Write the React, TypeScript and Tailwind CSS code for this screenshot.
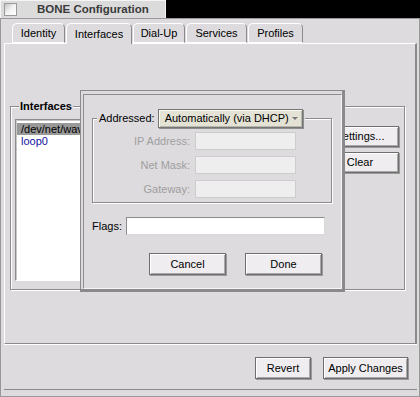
import React from "react";

const tabs = [
  { label: "Identity", w: "w-[53px]" },
  { label: "Interfaces", w: "w-[66px]" },
  { label: "Dial-Up", w: "w-[52px]" },
  { label: "Services", w: "w-[61px]" },
  { label: "Profiles", w: "w-[55px]" },
];

const BeButton: React.FC<{ label: string; className?: string }> = ({
  label,
  className = "",
}) => (
  <div
    className={`flex items-center justify-center border border-[#6e6e6e] bg-[#efedef] text-black shadow-[inset_1px_1px_0_#ffffff,inset_-1px_-1px_0_#a9a9a9,1px_1px_0_#9a9a9a] ${className}`}
  >
    {label}
  </div>
);

const DisabledRow: React.FC<{ label: string }> = ({ label }) => (
  <div className="flex items-center gap-[5px]">
    <div className="w-[97px] text-right text-[#9e9e9e]">{label}</div>
    <div className="h-[18px] w-[101px] border border-[#cdcdcd] bg-[#efeeef]" />
  </div>
);

/**
 * BONE Configuration window with the interface settings dialog on top
 */
export default function App() {
  return (
    <div className="relative h-[397px] w-[420px] overflow-hidden bg-black font-['Liberation_Sans',Arial,sans-serif] text-[11px] leading-[13px] text-black">
      {/* window tab */}
      <div className="flex h-[18px] w-[166px] items-center border-l border-r border-t border-l-[#f4f4f4] border-r-[#f4f4f4] border-t-[#f4f4f4] bg-[#dcdbdc]">
        <div className="ml-[3px] h-[13px] w-[13px] border border-[#9a9a9a] bg-gradient-to-br from-[#c4c4c4] via-[#f2f2f2] to-white" />
        <div className="ml-[20px] text-[11.5px] font-bold text-[#3a3a3a]">
          BONE Configuration
        </div>
      </div>

      {/* window body */}
      <div className="flex h-[379px] flex-col border border-[#989898] bg-[#dddbde] pb-[6px] pl-[3px] pr-[2px] pt-[4px]">
        <div className="relative z-10 flex h-[20px] items-end gap-[1px] pl-[8px]">
          {tabs.map((t) => (
            <div
              key={t.label}
              className={`flex h-[20px] items-center justify-center rounded-tl-[5px] rounded-tr-[5px] border-l border-r border-t border-l-white border-r-[#8a8a8a] border-t-white ${t.w} ${
                t.label === "Interfaces"
                  ? "-mb-[1px] h-[21px] bg-[#dddbde]"
                  : "border-b border-b-white"
              }`}
            >
              {t.label}
            </div>
          ))}
        </div>

        {/* tab panel */}
        <div className="h-[301px] border-b border-l border-r-2 border-t border-b-[#8a8a8a] border-l-white border-r-[#8a8a8a] border-t-white">
          <fieldset className="ml-[5px] mr-[10px] mt-[56px] h-[190px] border border-[#8c8c8c] shadow-[1px_1px_0_#ffffff,inset_1px_1px_0_#ffffff]">
            <legend className="ml-[8px] bg-[#dddbde] px-[1px] font-bold">
              Interfaces
            </legend>
            <div className="flex gap-[8px] pl-[4px] pr-[5px] pt-[6px]">
              <div className="h-[162px] flex-1 border border-b-white border-l-[#8c8c8c] border-r-white border-t-[#8c8c8c] bg-white pt-[3px] shadow-[inset_1px_1px_0_#c8c8c8]">
                <div className="mx-[1px] bg-[#999999] pl-[4px] leading-[12px]">
                  /dev/net/wavelan/0
                </div>
                <div className="pl-[5px] leading-[13px] text-[#1414a4]">
                  loop0
                </div>
              </div>
              <div className="flex w-[78px] flex-col gap-[5px] pt-[7px]">
                <BeButton label="Settings..." className="h-[21px]" />
                <BeButton label="Clear" className="h-[21px]" />
              </div>
            </div>
          </fieldset>
        </div>

        {/* bottom buttons */}
        <div className="flex flex-1 items-center justify-end gap-[12px] border-b border-t border-b-[#8a8a8a] border-t-white pr-[9px] pt-[2px]">
          <BeButton label="Revert" className="h-[22px] w-[56px]" />
          <BeButton label="Apply Changes" className="h-[22px] w-[85px]" />
        </div>
      </div>

      {/* interface settings dialog */}
      <div className="absolute left-[80px] top-[90px] h-[202px] w-[265px] border-b-[3px] border-l border-r-[3px] border-t border-[#8a8a8a] bg-[#dddbde] pl-[2px] pt-[3px]">
        <div className="h-full border border-b-[#f6f6f6] border-l-[#8c8c8c] border-r-[#f6f6f6] border-t-[#8c8c8c]">
          <fieldset className="ml-[8px] mt-[14px] w-[240px] border border-[#8c8c8c] pb-[4px] shadow-[1px_1px_0_#ffffff,inset_1px_1px_0_#ffffff]">
            <legend className="ml-[4px] bg-[#dddbde] pl-[2px] pr-[2px]">
              <div className="flex items-center gap-[3px]">
                <span>Addressed:</span>
                <div className="flex h-[19px] w-[145px] items-center justify-between border border-[#767676] bg-[#e4e2d5] pl-[6px] pr-[4px] shadow-[inset_1px_1px_0_#fbfaf2,inset_-1px_-1px_0_#b9b8ad,1px_1px_0_#8e8e8e]">
                  <span>Automatically (via DHCP)</span>
                  <svg width="6" height="4" viewBox="0 0 6 4">
                    <path d="M0 0 H6 L3 3 Z" fill="#777777" />
                  </svg>
                </div>
              </div>
            </legend>
            <div className="flex flex-col gap-[6px] pt-[4px]">
              <DisabledRow label="IP Address:" />
              <DisabledRow label="Net Mask:" />
              <DisabledRow label="Gateway:" />
            </div>
          </fieldset>

          <div className="ml-[8px] mt-[14px] flex items-center gap-[4px]">
            <span>Flags:</span>
            <div className="h-[18px] w-[199px] border border-b-[#d8d8d8] border-l-[#8c8c8c] border-r-[#d8d8d8] border-t-[#8c8c8c] bg-white" />
          </div>

          <div className="ml-[65px] mt-[18px] flex gap-[19px]">
            <BeButton label="Cancel" className="h-[22px] w-[77px]" />
            <BeButton label="Done" className="h-[22px] w-[77px]" />
          </div>
        </div>
      </div>
    </div>
  );
}
